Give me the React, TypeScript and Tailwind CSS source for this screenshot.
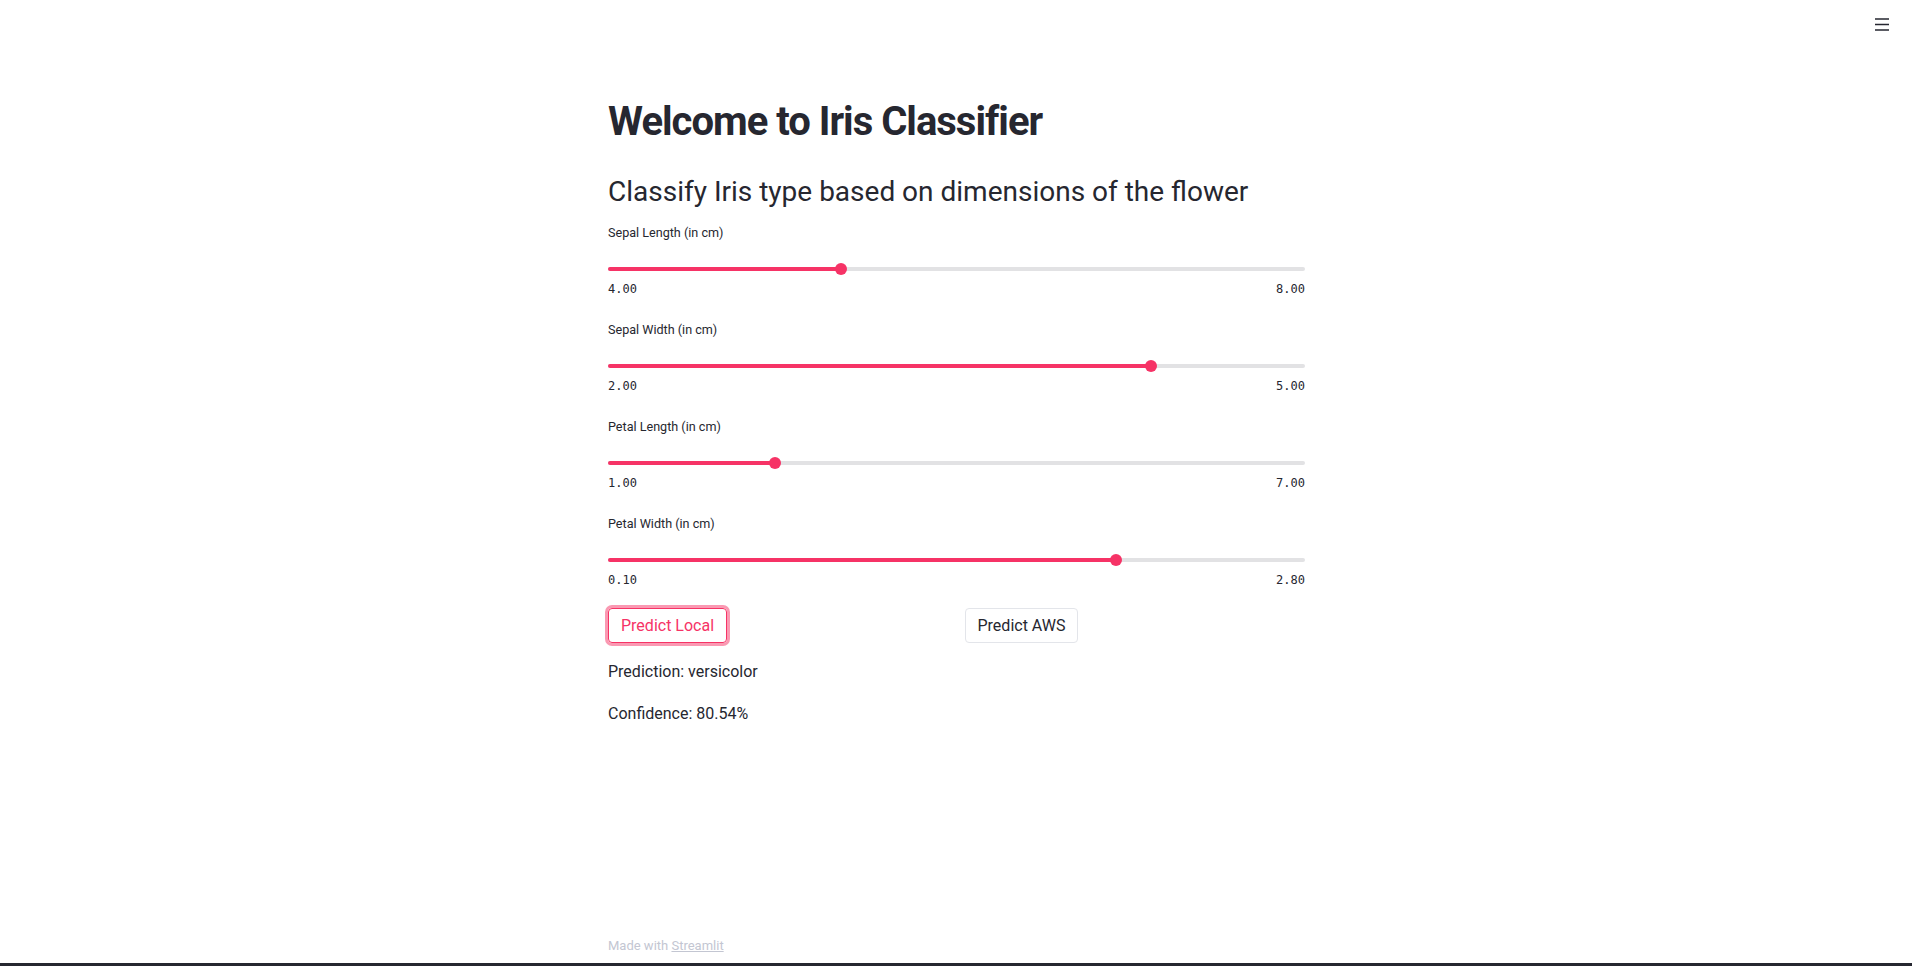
const sliders = [
  { label: "Sepal Length (in cm)", min: "4.00", max: "8.00", pct: 33.4 },
  { label: "Sepal Width (in cm)", min: "2.00", max: "5.00", pct: 77.9 },
  { label: "Petal Length (in cm)", min: "1.00", max: "7.00", pct: 24.0 },
  { label: "Petal Width (in cm)", min: "0.10", max: "2.80", pct: 72.9 },
];

function Slider({ label, min, max, pct }: (typeof sliders)[number]) {
  return (
    <div className="mb-[25px]">
      <div className="h-4 text-[12.6px] leading-4 text-[#262730]">{label}</div>
      {/* track */}
      <div className="relative mt-[22px] h-[13px] flex items-center">
        <div className="w-full h-[4px] rounded-full bg-[#e2e2e4]" />
        <div
          className="absolute left-0 h-[4px] rounded-full bg-[#f63366]"
          style={{ width: `${pct}%` }}
        />
        <div
          className="absolute w-3 h-3 -ml-[6px] rounded-full bg-[#f63366]"
          style={{ left: `${pct}%` }}
        />
      </div>
      <div
        className="mt-[5px] h-4 flex justify-between text-[12px] leading-4 text-[#262730]"
        style={{ fontFamily: '"DejaVu Sans Mono", monospace' }}
      >
        <span>{min}</span>
        <span>{max}</span>
      </div>
    </div>
  );
}

export default function App() {
  return (
    <div
      className="relative min-h-screen flex flex-col bg-white text-[#262730]"
      style={{ fontFamily: 'Roboto, "Noto Sans", sans-serif' }}
    >
      {/* header menu */}
      <button className="absolute top-[16px] right-[22px] text-[#262730]">
        <svg width="16" height="16" viewBox="0 0 16 16" fill="none">
          <path d="M1 3h14M1 8.5h14M1 14h14" stroke="currentColor" strokeWidth="1.6" />
        </svg>
      </button>

      <main className="w-[730px] mx-auto pl-[17px] pr-4 pt-[95px] flex-1">
        <h1 className="text-[40px] leading-[53px] font-bold tracking-[-1px]">
          Welcome to Iris Classifier
        </h1>
        <h3 className="mt-[27px] text-[28px] leading-[1.2] font-normal">
          Classify Iris type based on dimensions of the flower
        </h3>

        <div className="mt-4">
          {sliders.map((s) => (
            <Slider key={s.label} {...s} />
          ))}
        </div>

        <div className="-mt-[5px] grid grid-cols-2 gap-4">
          <div>
            <button className="px-3 py-1 text-[16px] leading-[1.6] rounded border border-[#f63366] text-[#f63366] shadow-[0_0_0_3px_rgba(246,51,102,0.5)]">
              Predict Local
            </button>
          </div>
          <div>
            <button className="px-3 py-1 text-[16px] leading-[1.6] rounded border border-[#e3e5ea] text-[#262730]">
              Predict AWS
            </button>
          </div>
        </div>

        <p className="mt-4 text-[16px] leading-[1.6]">Prediction: versicolor</p>
        <p className="mt-4 text-[16px] leading-[1.6]">Confidence: 80.54%</p>
      </main>

      <footer className="w-[730px] mx-auto pl-[17px] pr-4 pb-[9px] text-[13px] leading-4 text-[#c3c6d2]">
        Made with <span className="underline">Streamlit</span>
      </footer>
      <div className="h-[3px] bg-[#262730]" />
    </div>
  );
}
